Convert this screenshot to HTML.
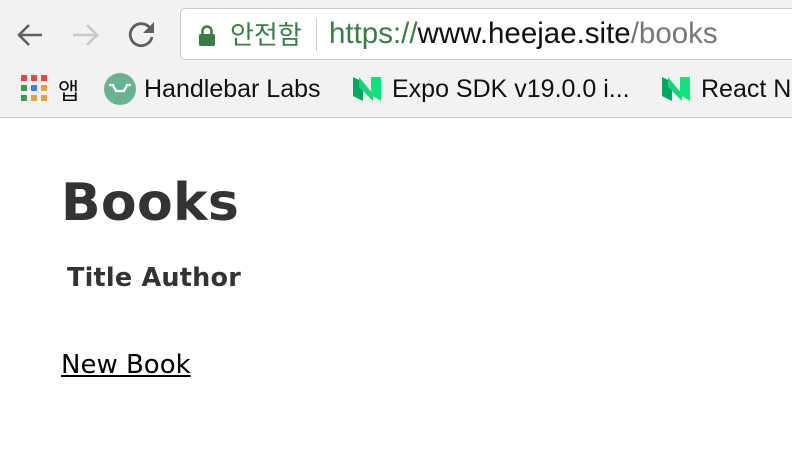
<!DOCTYPE html>
<html><head><meta charset="utf-8"><style>
*{margin:0;padding:0;box-sizing:border-box}
body{width:792px;height:458px;overflow:hidden;background:#fff;font-family:"Liberation Sans","Noto Sans CJK KR",sans-serif;position:relative}
#tb{position:absolute;left:0;top:0;width:792px;height:118px;background:#f2f2f2;border-bottom:1px solid #c4c4c4}
#addr{position:absolute;left:180px;top:8px;width:640px;height:52px;background:#fff;border:1px solid #c9c9c9;border-radius:5px}
.t{position:absolute;white-space:nowrap}
#content{position:absolute;left:0;top:118px;font-family:"DejaVu Sans",Verdana,sans-serif;color:#333}
</style></head><body>
<div id="tb">
<svg class="t" style="left:14px;top:20px" width="32" height="30" viewBox="0 0 32 30"><path d="M28 15H5M15 5L5 15l10 10" stroke="#5f5f5f" stroke-width="2.6" fill="none"/></svg>
<svg class="t" style="left:70px;top:20px" width="32" height="30" viewBox="0 0 32 30"><path d="M3 15h23M17 5l10 10-10 10" stroke="#c8c8c8" stroke-width="2.6" fill="none"/></svg>
<svg class="t" style="left:126px;top:18px" width="32" height="32" viewBox="0 0 32 32"><path d="M24 10A11 11 0 1 0 26 19" stroke="#5f5f5f" stroke-width="2.8" fill="none"/><path d="M28 4v11H17z" fill="#5f5f5f"/></svg>
<div id="addr">
<svg class="t" style="left:17px;top:16px" width="18" height="22" viewBox="0 0 18 22"><rect x="1" y="9" width="16" height="12" rx="1.5" fill="#3a7d44"/><path d="M4.5 9V6a4.5 4.5 0 0 1 9 0v3" stroke="#3a7d44" stroke-width="2.5" fill="none"/></svg>
<div class="t" style="left:49px;top:10px;font-size:26px;color:#3a7d44;font-family:'Noto Sans CJK KR',sans-serif;line-height:30px">안전함</div>
<div class="t" style="left:135px;top:9px;width:1px;height:33px;background:#c9c9c9"></div>
<div class="t" style="left:148px;top:10px;font-size:29.5px;line-height:30px;color:#3a7d44">https://<span style="color:#111">www.heejae.site</span><span style="color:#777">/books</span></div>
</div>
<svg class="t" style="left:21px;top:75px" width="27" height="27" viewBox="0 0 27 27">
<g><rect x="0" y="0" width="6" height="6" fill="#e04b3f"/><rect x="10" y="0" width="6" height="6" fill="#e04b3f"/><rect x="20" y="0" width="6" height="6" fill="#e04b3f"/>
<rect x="0" y="10" width="6" height="6" fill="#3f9a4d"/><rect x="10" y="10" width="6" height="6" fill="#3b82e8"/><rect x="20" y="10" width="6" height="6" fill="#e6a23a"/>
<rect x="0" y="20" width="6" height="6" fill="#3f9a4d"/><rect x="10" y="20" width="6" height="6" fill="#e6a23a"/><rect x="20" y="20" width="6" height="6" fill="#e6a23a"/></g></svg>
<div class="t" style="left:58px;top:74px;font-size:23px;line-height:30px;font-family:'Noto Sans CJK KR',sans-serif;color:#111">앱</div>
<svg class="t" style="left:104px;top:73px" width="32" height="32" viewBox="0 0 32 32"><circle cx="16" cy="16" r="16" fill="#6ab38f"/><path d="M5 12h4l3 6h8l3-6h4" stroke="#fff" stroke-width="2.2" fill="none"/></svg>
<div class="t" style="left:144px;top:74px;font-size:25px;line-height:30px;color:#111">Handlebar Labs</div>
<svg class="t" style="left:353px;top:77px" width="30" height="24" viewBox="0 0 30 24"><path d="M0 0l10 5v19L0 19z" fill="#00a862"/><path d="M6 0l14 17V24L6 10z" fill="#1bd47a"/><path d="M18 0h10v24l-10-6z" fill="#12e27d"/></svg>
<div class="t" style="left:392px;top:74px;font-size:25px;line-height:30px;color:#111">Expo SDK v19.0.0 i...</div>
<svg class="t" style="left:662px;top:77px" width="30" height="24" viewBox="0 0 30 24"><path d="M0 0l10 5v19L0 19z" fill="#00a862"/><path d="M6 0l14 17V24L6 10z" fill="#1bd47a"/><path d="M18 0h10v24l-10-6z" fill="#12e27d"/></svg>
<div class="t" style="left:701px;top:74px;font-size:25px;line-height:30px;color:#111">React N</div>
</div>
<div id="content">
<div class="t" style="left:61px;top:55px;font-size:52px;font-weight:bold;line-height:60px;letter-spacing:0.3px">Books</div>
<div class="t" style="left:67px;top:145px;font-size:25.5px;font-weight:bold;line-height:30px;letter-spacing:0.2px">Title Author</div>
<div class="t" style="left:61px;top:232px;font-size:26px;line-height:30px;color:#000;text-decoration:underline">New Book</div>
</div>
</body></html>
